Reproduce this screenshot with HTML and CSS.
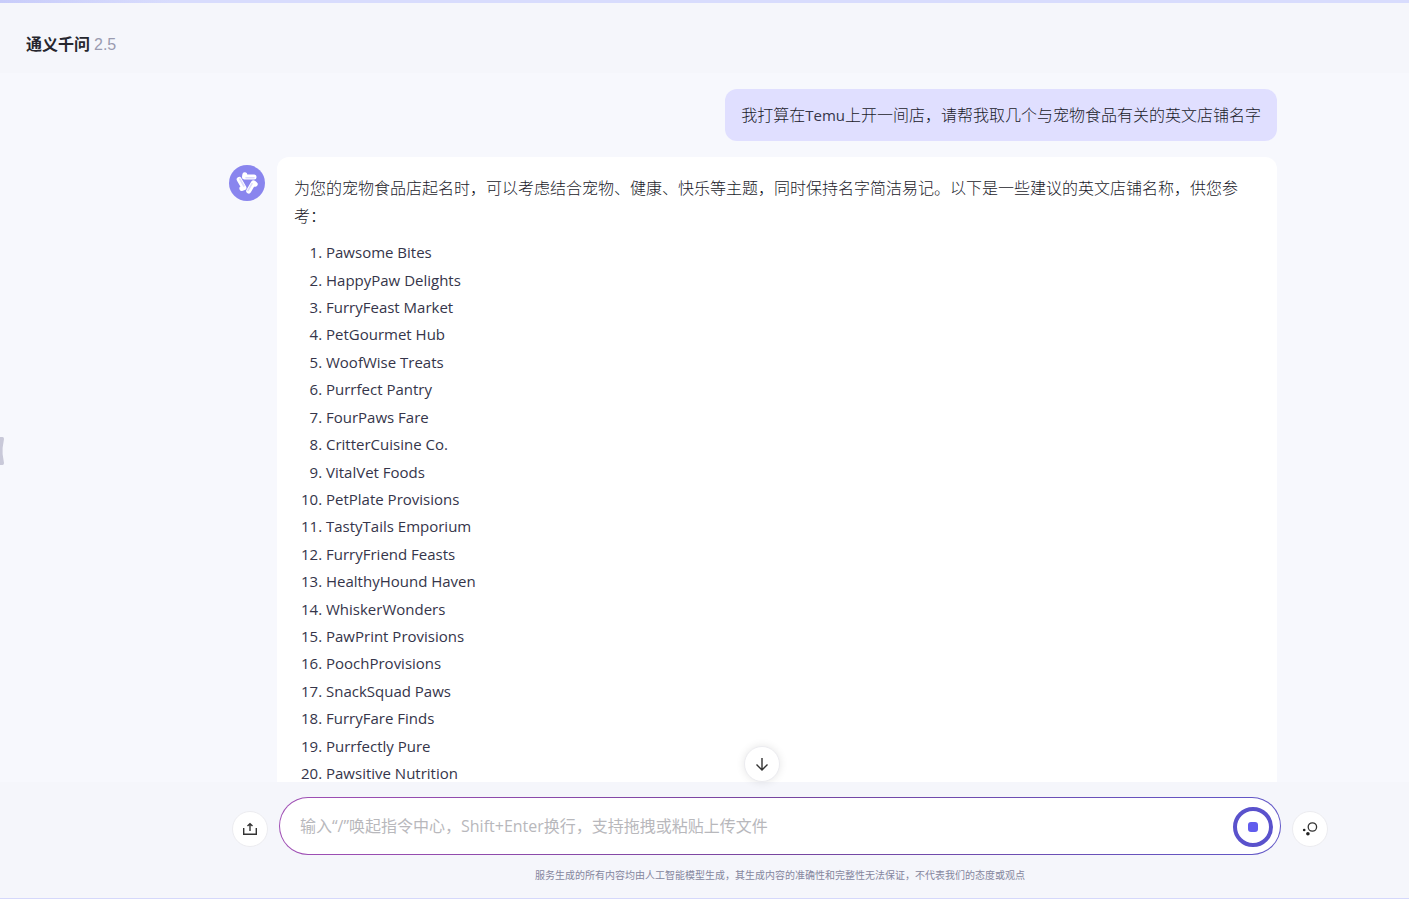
FILE: index.html
```html
<!DOCTYPE html>
<html lang="zh-CN">
<head>
<meta charset="utf-8">
<meta name="viewport" content="width=device-width, initial-scale=1">
<title>通义千问</title>
<link rel="stylesheet" href="styles.css">
</head>
<body>
<div class="app">
  <header class="header">
    <h1 class="brand">通义千问</h1>
    <span class="version">2.5</span>
  </header>

  <button class="drawer-handle" type="button" aria-label="展开侧栏">
    <svg width="4" height="30" viewBox="0 0 4 30"><path d="M0 1H2.5Q4 1 4 3L2.6 12V18L4 27Q4 29 2.5 29H0Z" fill="#c9c9d9"/></svg>
  </button>

  <main class="conversation">
    <div class="thread">
      <div class="question">我打算在<span class="latin">Temu</span>上开一间店，请帮我取几个与宠物食品有关的英文店铺名字</div>
      <article class="reply">
        <svg class="avatar" width="36" height="36" viewBox="0 0 36 36" aria-hidden="true">
          <circle cx="18" cy="18" r="18" fill="#8985ee"/>
          <g fill="none" stroke-linecap="round" stroke-linejoin="round">
            <g stroke="#fff" stroke-width="5">
              <path d="M15.800 9.800L15.500 12H25"/>
              <path d="M15.800 9.800L15.500 12H25" transform="rotate(120 18.300 17.500)"/>
              <path d="M15.800 9.800L15.500 12H25" transform="rotate(240 18.300 17.500)"/>
            </g>
            <g stroke="#dcdafb" stroke-width="1.600">
              <path d="M17 12.800H25"/>
              <path d="M17 12.800H25" transform="rotate(120 18.300 17.500)"/>
              <path d="M17 12.800H25" transform="rotate(240 18.300 17.500)"/>
            </g>
          </g>
        </svg>
        <div class="card">
          <p class="intro">为您的宠物食品店起名时，可以考虑结合宠物、健康、快乐等主题，同时保持名字简洁易记。以下是一些建议的英文店铺名称，供您参考：</p>
          <ol class="names">
            <li>Pawsome Bites</li>
            <li>HappyPaw Delights</li>
            <li>FurryFeast Market</li>
            <li>PetGourmet Hub</li>
            <li>WoofWise Treats</li>
            <li>Purrfect Pantry</li>
            <li>FourPaws Fare</li>
            <li>CritterCuisine Co.</li>
            <li>VitalVet Foods</li>
            <li>PetPlate Provisions</li>
            <li>TastyTails Emporium</li>
            <li>FurryFriend Feasts</li>
            <li>HealthyHound Haven</li>
            <li>WhiskerWonders</li>
            <li>PawPrint Provisions</li>
            <li>PoochProvisions</li>
            <li>SnackSquad Paws</li>
            <li>FurryFare Finds</li>
            <li>Purrfectly Pure</li>
            <li>Pawsitive Nutrition</li>
          </ol>
        </div>
      </article>
    </div>
  </main>

  <footer class="footer">
    <button class="round scroll-down" type="button" aria-label="滚动到底部">
      <svg width="16" height="16" viewBox="0 0 16 16" fill="none" stroke="#333" stroke-width="1.400"><path d="M8 2V14M2.500 8.500L8 14L13.500 8.500"/></svg>
    </button>
    <form class="composer">
      <button class="round" type="button" aria-label="上传文件">
        <svg width="16" height="16" viewBox="0 0 16 16" fill="none" stroke="#333" stroke-width="1.400"><path d="M1.700 7V13.300H14.300V7M8 10V3M5.500 5L8 2.700L10.500 5"/></svg>
      </button>
      <div class="field">
        <input class="prompt" type="text" aria-label="输入消息" placeholder="输入“/”唤起指令中心，Shift+Enter换行，支持拖拽或粘贴上传文件">
        <button class="stop" type="button" aria-label="停止生成"><span class="stop-mark"></span></button>
      </div>
      <button class="round" type="button" aria-label="清除上下文">
        <svg width="16" height="16" viewBox="0 0 16 16"><circle cx="10.400" cy="6" r="4.200" fill="none" stroke="#333" stroke-width="1.300"/><circle cx="2.200" cy="9" r="1.300" fill="#222"/><circle cx="5.900" cy="12.800" r="1.800" fill="#222"/></svg>
      </button>
    </form>
    <p class="notice">服务生成的所有内容均由人工智能模型生成，其生成内容的准确性和完整性无法保证，不代表我们的态度或观点</p>
  </footer>
</div>
</body>
</html>
```
FILE: styles.css
```css
* {
  box-sizing: border-box;
}

body {
  margin: 0;
  color: #1a1a2a;
  font-family: "Open Sans", "Noto Sans CJK SC", sans-serif;
  font-size: 16px;
  font-weight: 300;
  line-height: 1.714;
}

button {
  padding: 0;
  border: 0;
  background: none;
  cursor: pointer;
}

svg {
  display: block;
}

.app {
  position: relative;
  display: flex;
  flex-direction: column;
  height: 100vh;
  background: #f7f8fd;
  border-bottom: 1px solid #d5d8fb;
}

.app::before {
  content: "";
  flex: none;
  height: 3px;
  background: linear-gradient(90deg, #c8ccfa, #d8dcfd 12%, #d8dcfd);
}

.header {
  flex: none;
  display: flex;
  align-items: center;
  gap: 4px;
  height: 70px;
  padding: 14px 26px 0;
  background: #f5f6fb;
}

.brand {
  margin: 0;
  color: #26262e;
  font-size: 16px;
  font-weight: 700;
}

.version {
  color: #9a9bb0;
  font-family: "Liberation Sans", sans-serif;
}

.drawer-handle {
  position: absolute;
  top: calc(50% + 2px);
  left: 0;
  transform: translateY(-50%);
}

.conversation {
  flex: 1;
  min-height: 0;
  overflow: hidden;
  padding: 16px 0 0 151px;
}

.thread {
  display: flex;
  flex-direction: column;
  gap: 16px;
  max-width: 1102px;
  margin: 0 auto;
  padding-right: 54px;
}

.question {
  align-self: flex-end;
  padding: 13px 16px 12px;
  border-radius: 12px;
  background: #e0dfff;
}

.latin {
  color: #35354a;
  font-size: 15px;
  font-weight: 400;
}

.reply {
  display: flex;
  align-items: flex-start;
  gap: 12px;
}

.avatar {
  flex: none;
  margin-top: 8px;
}

.card {
  flex: 1;
  padding: 18px 17px;
  border-radius: 12px;
  background: #fff;
}

.intro {
  margin: 0 0 9px;
}

.names {
  margin: 0;
  padding-left: 32px;
  color: #35354a;
  font-size: 15px;
  font-weight: 400;
  line-height: 1.828;
}

.footer {
  position: relative;
  flex: none;
  padding: 15px 0 14px 151px;
  background: #f5f6fb;
}

.composer {
  display: flex;
  align-items: center;
  gap: 11px;
  max-width: 1096px;
  margin: 0 auto;
}

.round {
  flex: none;
  display: grid;
  place-items: center;
  width: 36px;
  height: 36px;
  border: 1px solid #ececf0;
  border-radius: 50%;
  background: #fff;
}

.composer .round {
  margin-top: 5px;
}

.scroll-down {
  position: absolute;
  top: -36px;
  left: calc(50% + 39px);
  box-shadow: 0 0 8px rgba(0, 0, 0, 0.1);
}

.field {
  flex: 1;
  display: flex;
  align-items: center;
  height: 58px;
  padding: 2px 7px 0 20px;
  border: 1px solid transparent;
  border-radius: 29px;
  background:
    linear-gradient(#fff, #fff) padding-box,
    linear-gradient(90deg, #a04fb5, #77459f 50%, #6258c8) border-box;
}

.prompt {
  flex: 1;
  min-width: 0;
  padding: 0;
  border: 0;
  outline: 0;
  background: none;
  font: inherit;
  font-weight: 400;
}

.prompt::placeholder {
  color: #b8b8bc;
  opacity: 1;
}

.stop {
  flex: none;
  display: grid;
  place-items: center;
  width: 40px;
  height: 40px;
  border: 4px solid #5a52cc;
  border-radius: 50%;
}

.stop-mark {
  width: 10px;
  height: 10px;
  border-radius: 3px;
  background: #615ced;
}

.notice {
  margin: 11px 0 0;
  color: #85869e;
  font-size: 10px;
  font-weight: 400;
  line-height: 18px;
  text-align: center;
}
```
